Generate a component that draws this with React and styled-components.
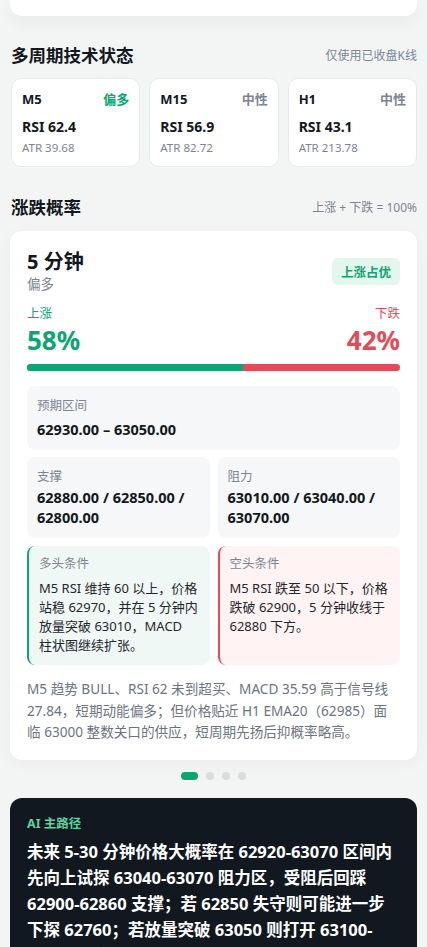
import React from "react";
import styled, { createGlobalStyle } from "styled-components";

const GREEN = "#0aa673";
const RED = "#e24b57";
const GRAY = "#7b8592";
const INK = "#13181d";

const GlobalStyle = createGlobalStyle`
  * { box-sizing: border-box; }
  html, body {
    margin: 0;
    padding: 0;
    background: #f3f5f5;
    font-family: "Noto Sans", "Noto Sans CJK SC", sans-serif;
    color: ${INK};
  }
`;

const Page = styled.div`
  padding: 0 10px 40px;
  display: flex;
  flex-direction: column;
`;

const TopCard = styled.div`
  height: 16px;
  background: #fff;
  border-radius: 0 0 12px 12px;
  box-shadow: 0 6px 16px rgba(20, 30, 40, 0.05);
`;

const SectionHead = styled.div`
  display: flex;
  align-items: center;
  justify-content: space-between;
  margin-top: ${(p) => p.$top}px;
  padding-left: 1px;
  height: 24px;
`;

const SectionTitle = styled.h2`
  margin: 0;
  font-size: 17.5px;
  font-weight: 700;
  line-height: 24px;
`;

const SectionNote = styled.span`
  font-size: 12px;
  color: ${GRAY};
`;

const TfGrid = styled.div`
  display: grid;
  grid-template-columns: repeat(3, 1fr);
  gap: 9px;
  margin-top: 11px;
  padding-left: 1px;
`;

const TfCard = styled.div`
  background: #fff;
  border: 1px solid #e7eaec;
  border-radius: 10px;
  padding: 11px 10px 10px 10px;
`;

const TfTop = styled.div`
  display: flex;
  justify-content: space-between;
  align-items: center;
  font-size: 13px;
  font-weight: 700;
  line-height: 18px;
`;

const Bias = styled.span`
  color: ${(p) => (p.$bull ? GREEN : GRAY)};
`;

const Rsi = styled.div`
  margin-top: 9px;
  font-size: 14px;
  font-weight: 700;
  line-height: 20px;
`;

const Atr = styled.div`
  margin-top: 3px;
  font-size: 11.5px;
  color: ${GRAY};
  line-height: 16px;
`;

const Card = styled.div`
  margin-top: 12px;
  background: #fff;
  border-radius: 12px;
  padding: 18px 17px 17px;
  box-shadow: 0 4px 16px rgba(20, 30, 40, 0.04);
`;

const Head = styled.div`
  display: flex;
  justify-content: space-between;
  align-items: center;
`;

const Period = styled.div`
  font-size: 20px;
  font-weight: 700;
  line-height: 26px;
`;

const Sub = styled.div`
  font-size: 13.5px;
  color: ${GRAY};
  line-height: 19px;
`;

const Badge = styled.span`
  height: 27px;
  display: inline-flex;
  align-items: center;
  padding: 0 9px;
  border-radius: 6px;
  background: #e5f6ee;
  color: ${GREEN};
  font-size: 12.5px;
  font-weight: 700;
`;

const ProbRow = styled.div`
  display: flex;
  justify-content: space-between;
  margin-top: 11px;
`;

const ProbCol = styled.div`
  display: flex;
  flex-direction: column;
  align-items: ${(p) => (p.$right ? "flex-end" : "flex-start")};
  color: ${(p) => p.$color};
`;

const ProbLabel = styled.span`
  font-size: 12.5px;
  line-height: 18px;
`;

const ProbValue = styled.span`
  font-size: 26px;
  font-weight: 700;
  line-height: 34px;
`;

const Bar = styled.div`
  margin-top: 7px;
  height: 7px;
  border-radius: 4px;
  overflow: hidden;
  display: flex;
  background: ${RED};
`;

const BarFill = styled.div`
  background: ${GREEN};
  height: 100%;
`;

const InfoBox = styled.div`
  background: #f6f7f8;
  border-radius: 8px;
  padding: 11px 10px 11px;
`;

const RangeBox = styled(InfoBox)`
  margin-top: 15px;
`;

const Pair = styled.div`
  display: grid;
  grid-template-columns: 1fr 1fr;
  gap: 8px;
  margin-top: ${(p) => p.$top}px;
`;

const BoxLabel = styled.div`
  font-size: 12.5px;
  color: ${GRAY};
  line-height: 18px;
`;

const BoxValue = styled.div`
  margin-top: ${(p) => p.$gap ?? 4}px;
  font-size: 14.5px;
  font-weight: 700;
  line-height: 20px;
`;

const CondBox = styled.div`
  border-radius: 8px;
  border-left: 2px solid ${(p) => (p.$bull ? GREEN : RED)};
  background: ${(p) => (p.$bull ? "#f0f8f5" : "#fff3f3")};
  padding: 9px 11px 10px 10px;
`;

const CondText = styled.div`
  margin-top: 6px;
  font-size: 13px;
  line-height: 19px;
  color: #1f262c;
`;

const Keep = styled.span`
  white-space: nowrap;
`;

const Summary = styled.p`
  margin: 13px 0 0;
  font-size: 13.6px;
  line-height: 21.5px;
  color: #6b7580;
`;

const Dots = styled.div`
  display: flex;
  justify-content: center;
  gap: 8px;
  margin-top: 12px;
`;

const Dot = styled.span`
  width: ${(p) => (p.$active ? 17 : 8)}px;
  height: 8px;
  border-radius: 4px;
  background: ${(p) => (p.$active ? GREEN : "#d7dddc")};
`;

const DarkCard = styled.div`
  margin-top: 18px;
  background: #111820;
  border-radius: 12px;
  padding: 17px 17px 20px;
`;

const DarkLabel = styled.div`
  font-size: 12.5px;
  font-weight: 700;
  color: #5cd3a0;
  line-height: 18px;
`;

const DarkText = styled.div`
  margin-top: 6px;
  font-size: 16.5px;
  font-weight: 700;
  line-height: 26px;
  color: #fff;
`;

const frames = [
  { tf: "M5", bias: "偏多", bull: true, rsi: "62.4", atr: "39.68" },
  { tf: "M15", bias: "中性", bull: false, rsi: "56.9", atr: "82.72" },
  { tf: "H1", bias: "中性", bull: false, rsi: "43.1", atr: "213.78" },
];

export default function App() {
  const up = 58;
  return (
    <>
      <GlobalStyle />
      <Page>
        <TopCard />

        <SectionHead $top={27}>
          <SectionTitle>多周期技术状态</SectionTitle>
          <SectionNote>仅使用已收盘K线</SectionNote>
        </SectionHead>
        <TfGrid>
          {frames.map((f) => (
            <TfCard key={f.tf}>
              <TfTop>
                <span>{f.tf}</span>
                <Bias $bull={f.bull}>{f.bias}</Bias>
              </TfTop>
              <Rsi>RSI {f.rsi}</Rsi>
              <Atr>ATR {f.atr}</Atr>
            </TfCard>
          ))}
        </TfGrid>

        <SectionHead $top={28}>
          <SectionTitle>涨跌概率</SectionTitle>
          <SectionNote>上涨 + 下跌 = 100%</SectionNote>
        </SectionHead>

        <Card>
          <Head>
            <div>
              <Period>5 分钟</Period>
              <Sub>偏多</Sub>
            </div>
            <Badge>上涨占优</Badge>
          </Head>

          <ProbRow>
            <ProbCol $color={GREEN}>
              <ProbLabel>上涨</ProbLabel>
              <ProbValue>{up}%</ProbValue>
            </ProbCol>
            <ProbCol $color={RED} $right>
              <ProbLabel>下跌</ProbLabel>
              <ProbValue>{100 - up}%</ProbValue>
            </ProbCol>
          </ProbRow>
          <Bar>
            <BarFill style={{ width: `${up}%` }} />
          </Bar>

          <RangeBox>
            <BoxLabel>预期区间</BoxLabel>
            <BoxValue>62930.00 – 63050.00</BoxValue>
          </RangeBox>

          <Pair $top={7}>
            <InfoBox>
              <BoxLabel>支撑</BoxLabel>
              <BoxValue $gap={1}>62880.00 / 62850.00 / 62800.00</BoxValue>
            </InfoBox>
            <InfoBox>
              <BoxLabel>阻力</BoxLabel>
              <BoxValue $gap={1}>63010.00 / 63040.00 / 63070.00</BoxValue>
            </InfoBox>
          </Pair>

          <Pair $top={8}>
            <CondBox $bull>
              <BoxLabel>多头条件</BoxLabel>
              <CondText>
                M5 RSI 维持 60 以上，价格站稳 62970，并在 5 分钟内放量突破 63010，MACD <Keep>柱状图继续扩张。</Keep>
              </CondText>
            </CondBox>
            <CondBox>
              <BoxLabel>空头条件</BoxLabel>
              <CondText>
                M5 RSI 跌至 50 以下，价格跌破 62900，5 分钟收线于 62880 下方。
              </CondText>
            </CondBox>
          </Pair>

          <Summary>
            M5 趋势 BULL、RSI 62 未到超买、MACD 35.59 高于信号线 27.84，短期动能偏多；但价格贴近 H1 EMA20（62985）面临 63000 整数关口的供应，短周期先扬后抑概率略高。
          </Summary>
        </Card>

        <Dots>
          <Dot $active />
          <Dot />
          <Dot />
          <Dot />
        </Dots>

        <DarkCard>
          <DarkLabel>AI 主路径</DarkLabel>
          <DarkText>
            未来 5-30 分钟价格大概率在 62920-63070 区间内先向上试探 63040-63070 阻力区，受阻后回踩 62900-62860 支撑；若 62850 失守则可能进一步下探 62760；若放量突破 63050 则打开 63100-63150 上方空间。
          </DarkText>
        </DarkCard>
      </Page>
    </>
  );
}
